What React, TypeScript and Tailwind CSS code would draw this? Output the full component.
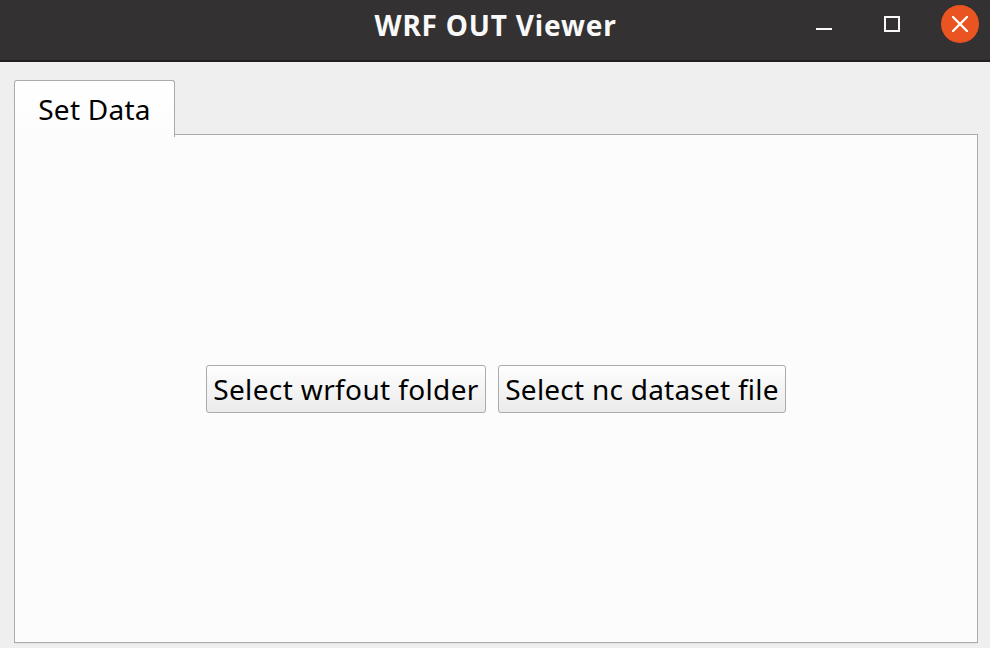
import React from "react";

function TitleBar() {
  return (
    <header className="grid h-[62px] shrink-0 grid-cols-[1fr_auto_1fr] border-b-2 border-[#231f20] bg-[#333132] text-[#f9f9f9]">
      <div />
      <h1 className="h-[50px] pl-px whitespace-nowrap text-[28px] leading-[51px] font-bold tracking-[0.8px]">WRF OUT Viewer</h1>
      <div className="flex h-12 items-center justify-end pr-[11px]">
        <button aria-label="Minimize" className="mr-[52px] h-4 w-4">
          <svg width="16" height="16" viewBox="0 0 16 16" className="block">
            <path d="M0 13H16" stroke="currentColor" strokeWidth="2" />
          </svg>
        </button>
        <button aria-label="Maximize" className="mr-[41px] h-4 w-4 border-2 border-[#f9f9f9]" />
        <button aria-label="Close" className="flex h-[38px] w-[38px] items-center justify-center rounded-full bg-[#e95420]">
          <svg width="16" height="16" viewBox="0 0 16 16" fill="none">
            <path d="M1 1L15 15M15 1L1 15" stroke="white" strokeWidth="2.3" strokeLinecap="round" />
          </svg>
        </button>
      </div>
    </header>
  );
}

function PushButton({ className, children }: { className: string; children: React.ReactNode }) {
  return (
    <button
      className={`flex h-12 items-center justify-center rounded-[3px] border border-[#ababab] bg-linear-to-b from-[#fefefe] to-[#ebebeb] pt-px whitespace-nowrap ${className}`}
    >
      {children}
    </button>
  );
}

export default function App() {
  return (
    <div className="flex h-[648px] w-[990px] flex-col overflow-hidden bg-[#efefef] font-['Noto_Sans','Open_Sans',sans-serif] text-[28px] text-black">
      <TitleBar />
      <main className="flex flex-1 flex-col pt-[18px] pr-3 pb-[5px] pl-[14px]">
        <div className="z-10 flex h-[57px] w-[161px] items-center justify-center rounded-t-[3px] border border-b-0 border-[#ababab] bg-linear-to-b from-white to-[#fcfcfc] tracking-[0.25px] whitespace-nowrap">
          <span>Set Data</span>
        </div>
        <section className="-mt-[3px] flex flex-1 items-center justify-center gap-3 border border-[#ababab] bg-[#fcfcfc] shadow-[0_1px_0_#e4e4e4]">
          <PushButton className="w-[280px] tracking-[0.37px]">Select wrfout folder</PushButton>
          <PushButton className="w-[288px] tracking-[0.24px]">Select nc dataset file</PushButton>
        </section>
      </main>
    </div>
  );
}
